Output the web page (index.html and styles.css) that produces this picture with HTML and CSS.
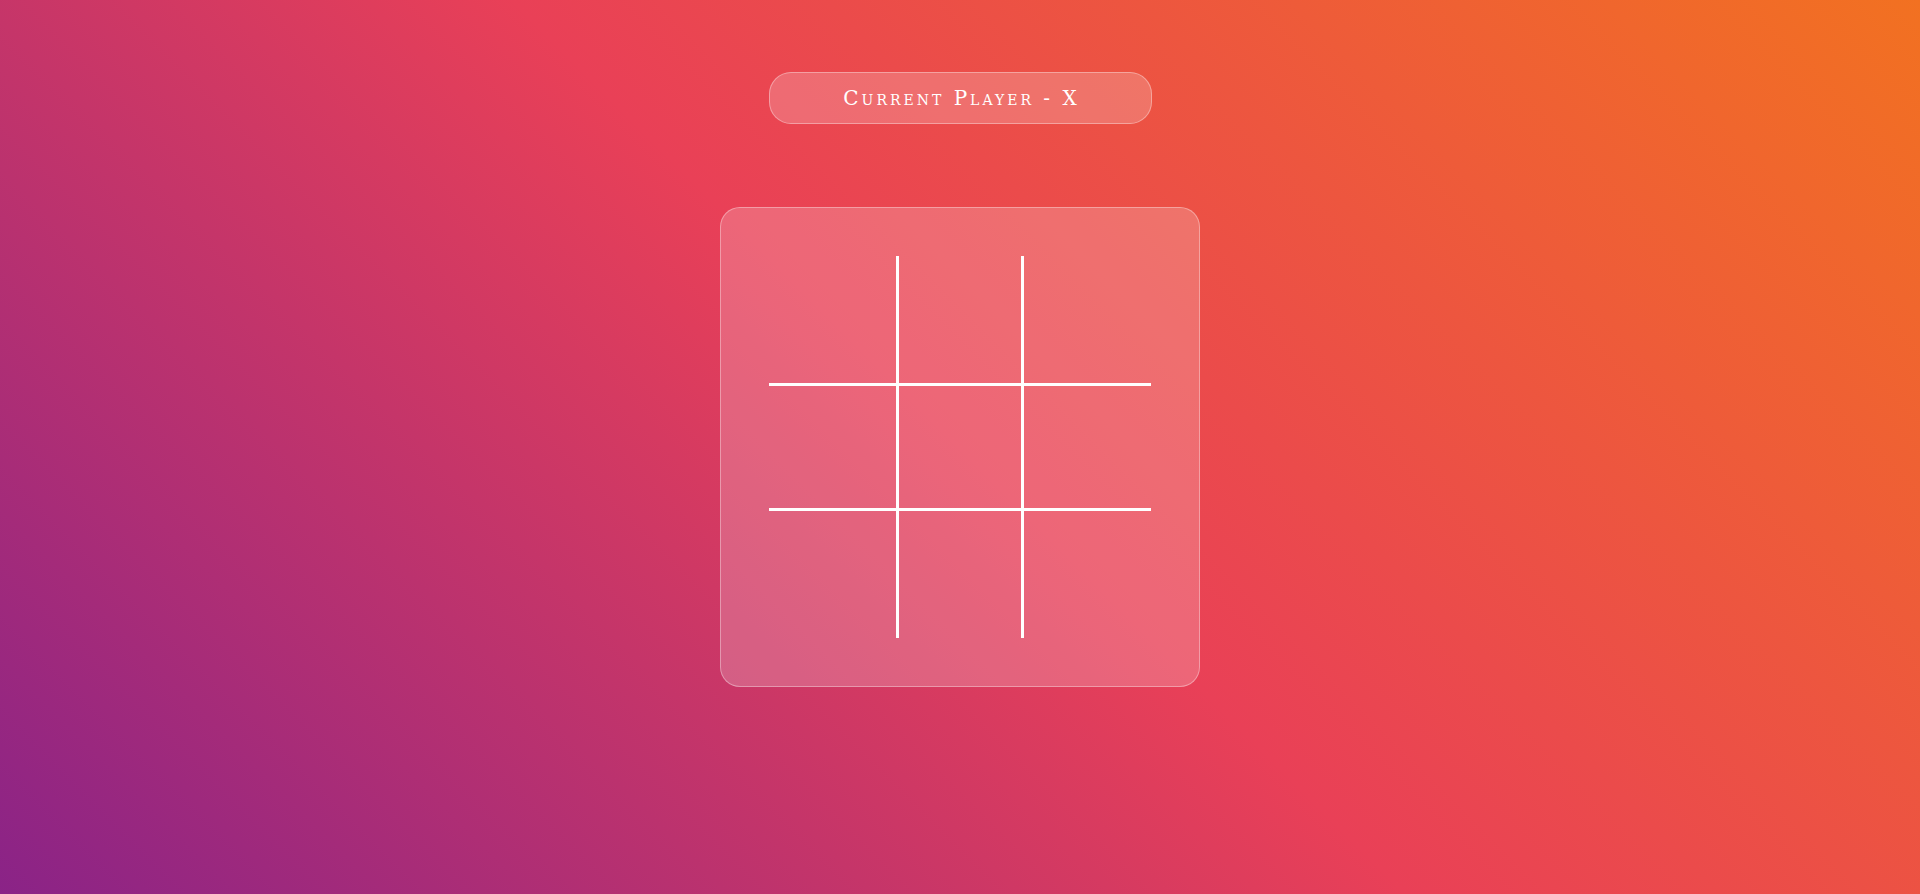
FILE: index.html
```html
<!DOCTYPE html>
<html lang="en">
<head>
<meta charset="utf-8">
<title>Tic Tac Toe</title>
<link rel="stylesheet" href="styles.css">
</head>
<body>
<main class="game">
  <div class="status">Current Player - X</div>
  <div class="board">
    <div class="grid">
      <div class="cell c-tl"></div>
      <div class="cell c-tm"></div>
      <div class="cell c-tr"></div>
      <div class="cell c-ml"></div>
      <div class="cell c-mm"></div>
      <div class="cell c-mr"></div>
      <div class="cell c-bl"></div>
      <div class="cell c-bm"></div>
      <div class="cell c-br"></div>
    </div>
  </div>
</main>
</body>
</html>
```

FILE: styles.css
```css
html, body {
  margin: 0;
  padding: 0;
  height: 100%;
}

body {
  background: linear-gradient(45deg, #8a2387 0%, #e94057 50%, #f27121 100%);
  font-family: "DejaVu Serif", "Liberation Serif", serif;
  color: #ffffff;
  overflow: hidden;
}

.game {
  display: flex;
  flex-direction: column;
  align-items: center;
  padding-top: 72px;
  gap: 83px;
}

.status {
  box-sizing: border-box;
  width: 383px;
  height: 52px;
  display: flex;
  align-items: center;
  justify-content: center;
  padding-left: 3px;
  background: rgba(255, 255, 255, 0.2);
  border: 1px solid rgba(255, 255, 255, 0.35);
  border-radius: 22px;
  font-size: 20px;
  font-variant: small-caps;
  letter-spacing: 3px;
  color: #ffffff;
}

.board {
  box-sizing: border-box;
  width: 480px;
  height: 480px;
  padding: 49px;
  background: rgba(255, 255, 255, 0.2);
  border: 1px solid rgba(255, 255, 255, 0.35);
  border-radius: 20px;
}

.grid {
  display: grid;
  grid-template-columns: 127px 128px 127px;
  grid-template-rows: 127px 128px 127px;
  width: 382px;
  height: 382px;
  margin: -1px;
}

.cell {
  box-sizing: border-box;
}

.c-tm, .c-mm, .c-bm {
  border-left: 3px solid #ffffff;
  border-right: 3px solid #ffffff;
}

.c-ml, .c-mm, .c-mr {
  border-top: 3px solid #ffffff;
  border-bottom: 3px solid #ffffff;
}
```
